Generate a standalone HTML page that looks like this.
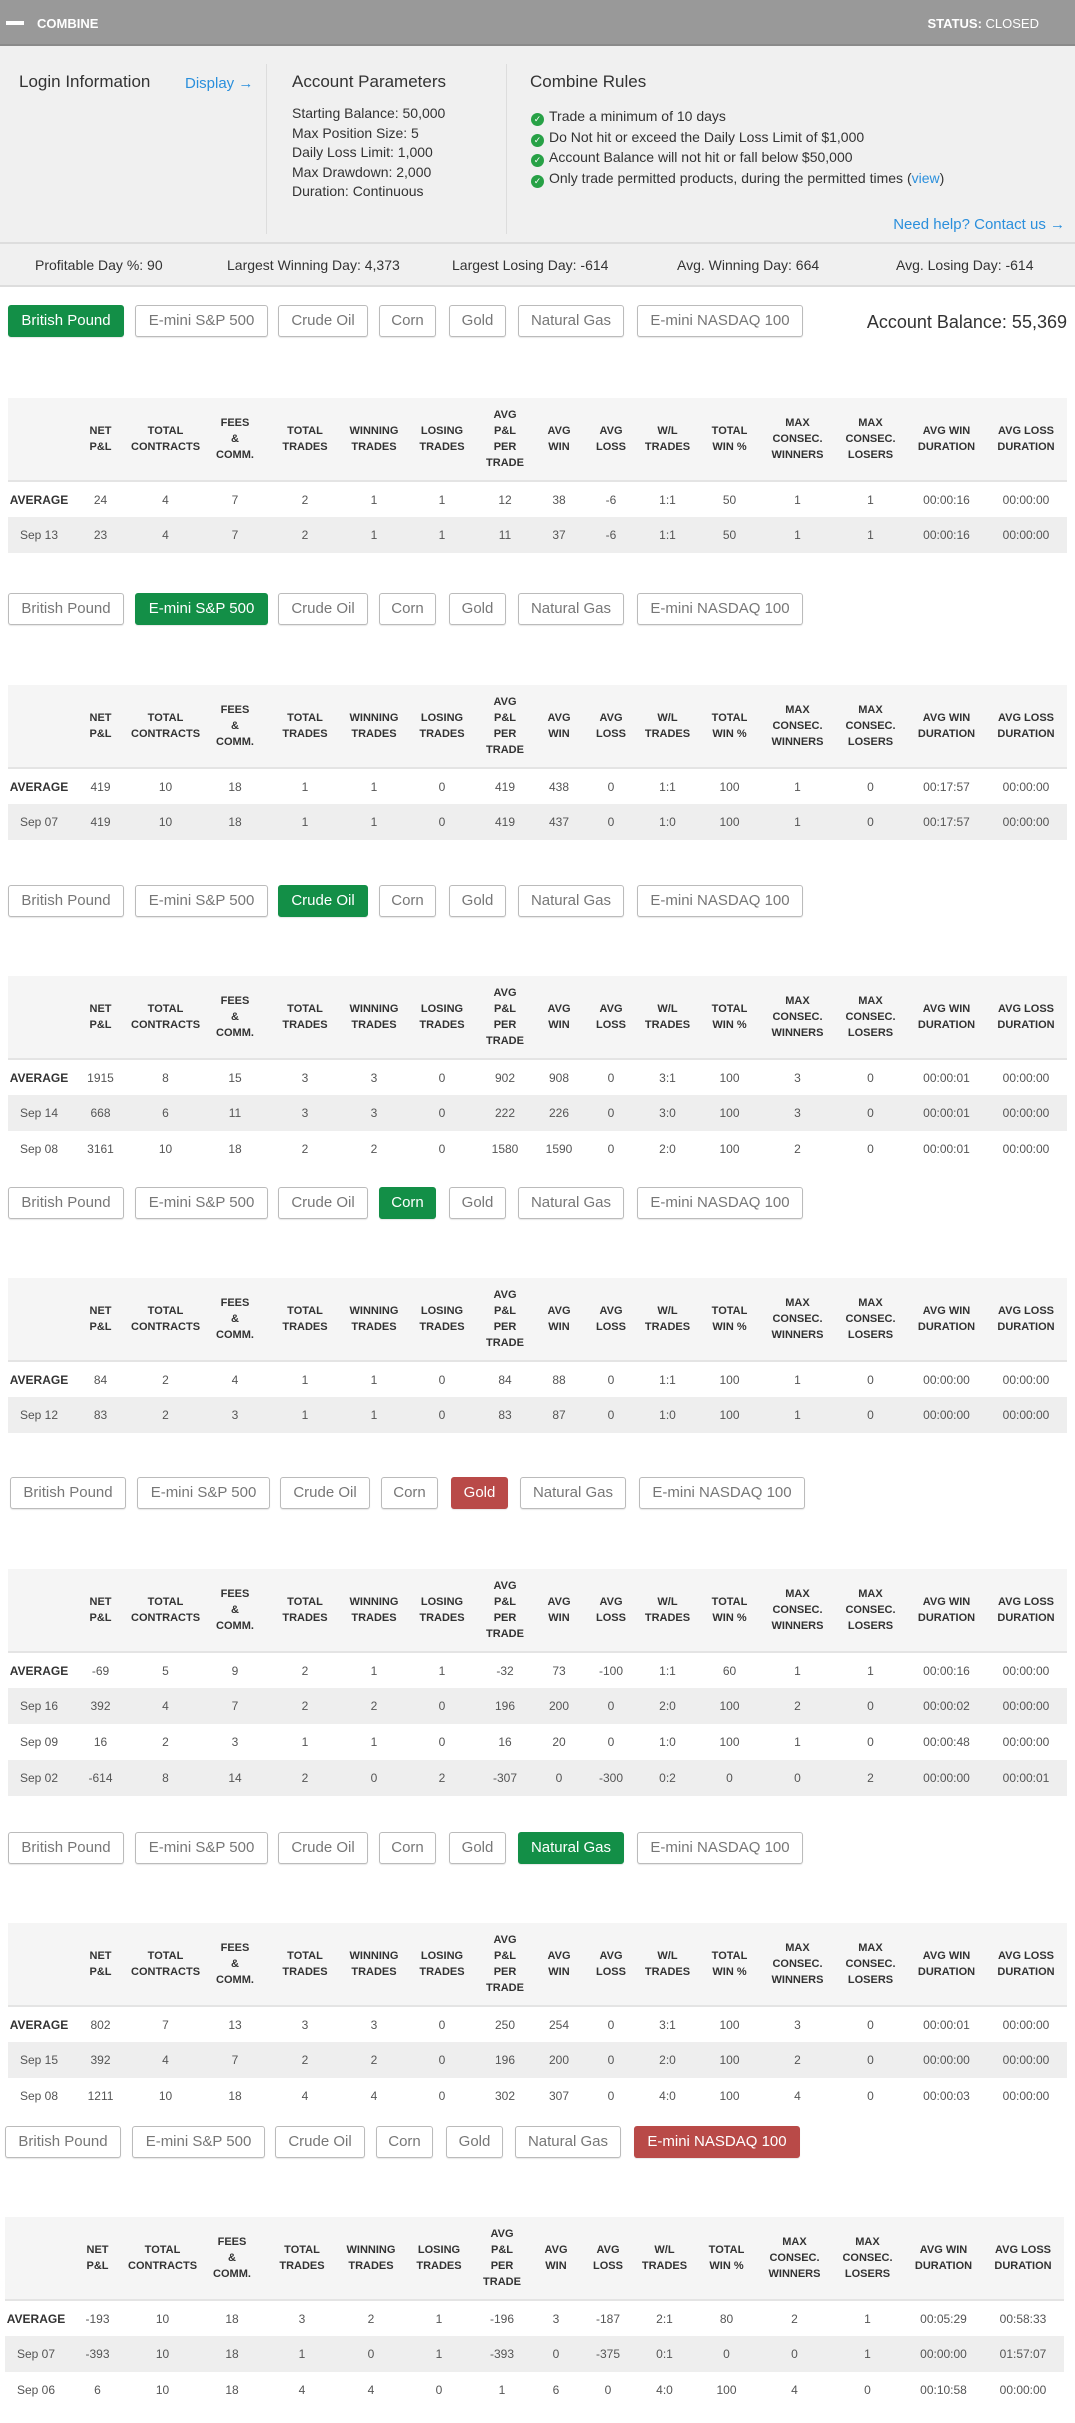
<!DOCTYPE html>
<html><head><meta charset="utf-8"><style>
*{box-sizing:border-box;margin:0;padding:0}
body{width:1075px;height:2423px;position:relative;background:#fff;font-family:"Liberation Sans",Arial,sans-serif;color:#333;overflow:hidden}
.hdr{position:absolute;left:0;top:0;width:1075px;height:46px;background:#999;border-bottom:2px solid #8a8a8a;color:#fff;font-size:13px;font-weight:bold}
.hdr .dash{position:absolute;left:6px;top:21px;width:18px;height:4px;background:#fff}
.hdr .t{position:absolute;left:37px;top:16px}
.hdr .s{position:absolute;right:36px;top:16px}
.hdr .s span{font-weight:normal}
.info{position:absolute;left:0;top:46px;width:1075px;height:198px;background:#f0f0f0;border-bottom:2px solid #ddd}
.a{position:absolute;white-space:nowrap}
.sep{position:absolute;top:18px;width:1px;height:170px;background:#ddd}
.h2{font-size:17px;color:#333}
.p{font-size:14px;color:#333;line-height:19.5px}
.blue{color:#2a8fdc}
.chk{display:inline-block;width:13px;height:13px;border-radius:50%;background:#27a146;color:#fff;font-size:9px;line-height:13px;text-align:center;margin-right:5px;vertical-align:-1px}
.stats{position:absolute;left:0;top:244px;width:1075px;height:43px;background:#f0f0f0;border-bottom:2px solid #ddd;font-size:14px}
.stats .a{top:13px}
.tabs{position:absolute;left:8px;height:32px}
.b{position:absolute;top:0;height:32px;border:1px solid #bbb;border-radius:3px;background:#fff;color:#777;font-size:15px;text-align:center;line-height:30px;box-shadow:0 1px 1px rgba(0,0,0,.1)}
.b.g{background:#138f47;border-color:#138f47;color:#fff}
.b.r{background:#b94a48;border-color:#b94a48;color:#fff}
table{position:absolute;left:8px;width:1059px;border-collapse:collapse;table-layout:fixed;font-size:12px}
th{background:#f5f5f5;font-size:11px;font-weight:bold;color:#333;line-height:16px;height:83px;border-bottom:2px solid #e4e4e4;text-align:center;vertical-align:middle}
td{height:36px;text-align:center;color:#555}
tr.e td{background:#eee}
td:first-child{color:#555}
tr.av td:first-child{font-weight:bold;color:#333}
</style></head><body>
<div class="hdr"><div class="dash"></div><div class="t">COMBINE</div><div class="s">STATUS: <span>CLOSED</span></div></div>
<div class="info">
<div class="a h2" style="left:19px;top:26px">Login Information</div>
<div class="a blue" style="left:185px;top:29px;font-size:15px">Display →</div>
<div class="sep" style="left:266px"></div>
<div class="a h2" style="left:292px;top:26px">Account Parameters</div>
<div class="a p" style="left:292px;top:58px">Starting Balance: 50,000<br>Max Position Size: 5<br>Daily Loss Limit: 1,000<br>Max Drawdown: 2,000<br>Duration: Continuous</div>
<div class="sep" style="left:506px"></div>
<div class="a h2" style="left:530px;top:26px">Combine Rules</div>
<div class="a p" style="left:531px;top:60px;line-height:20.7px"><span class="chk">✓</span>Trade a minimum of 10 days<br><span class="chk">✓</span>Do Not hit or exceed the Daily Loss Limit of $1,000<br><span class="chk">✓</span>Account Balance will not hit or fall below $50,000<br><span class="chk">✓</span>Only trade permitted products, during the permitted times (<span class="blue">view</span>)</div>
<div class="a blue" style="right:10px;top:170px;font-size:15px">Need help? Contact us →</div>
</div>
<div class="stats">
<div class="a" style="left:35px">Profitable Day %: 90</div>
<div class="a" style="left:227px">Largest Winning Day: 4,373</div>
<div class="a" style="left:452px">Largest Losing Day: -614</div>
<div class="a" style="left:677px">Avg. Winning Day: 664</div>
<div class="a" style="left:896px">Avg. Losing Day: -614</div>
</div>
<div class="a" style="right:8px;top:312px;font-size:18px;color:#333">Account Balance: 55,369</div>

<div class="tabs" style="top:305px"><div class="b g" style="left:0;width:116px">British Pound</div><div class="b" style="left:127px;width:133px">E-mini S&amp;P 500</div><div class="b" style="left:270px;width:90px">Crude Oil</div><div class="b" style="left:371px;width:57px">Corn</div><div class="b" style="left:441px;width:57px">Gold</div><div class="b" style="left:510px;width:106px">Natural Gas</div><div class="b" style="left:629px;width:166px">E-mini NASDAQ 100</div></div>
<div class="tabs" style="top:593px"><div class="b" style="left:0;width:116px">British Pound</div><div class="b g" style="left:127px;width:133px">E-mini S&amp;P 500</div><div class="b" style="left:270px;width:90px">Crude Oil</div><div class="b" style="left:371px;width:57px">Corn</div><div class="b" style="left:441px;width:57px">Gold</div><div class="b" style="left:510px;width:106px">Natural Gas</div><div class="b" style="left:629px;width:166px">E-mini NASDAQ 100</div></div>
<div class="tabs" style="top:885px"><div class="b" style="left:0;width:116px">British Pound</div><div class="b" style="left:127px;width:133px">E-mini S&amp;P 500</div><div class="b g" style="left:270px;width:90px">Crude Oil</div><div class="b" style="left:371px;width:57px">Corn</div><div class="b" style="left:441px;width:57px">Gold</div><div class="b" style="left:510px;width:106px">Natural Gas</div><div class="b" style="left:629px;width:166px">E-mini NASDAQ 100</div></div>
<div class="tabs" style="top:1187px"><div class="b" style="left:0;width:116px">British Pound</div><div class="b" style="left:127px;width:133px">E-mini S&amp;P 500</div><div class="b" style="left:270px;width:90px">Crude Oil</div><div class="b g" style="left:371px;width:57px">Corn</div><div class="b" style="left:441px;width:57px">Gold</div><div class="b" style="left:510px;width:106px">Natural Gas</div><div class="b" style="left:629px;width:166px">E-mini NASDAQ 100</div></div>
<div class="tabs" style="top:1477px;left:10px"><div class="b" style="left:0;width:116px">British Pound</div><div class="b" style="left:127px;width:133px">E-mini S&amp;P 500</div><div class="b" style="left:270px;width:90px">Crude Oil</div><div class="b" style="left:371px;width:57px">Corn</div><div class="b r" style="left:441px;width:57px">Gold</div><div class="b" style="left:510px;width:106px">Natural Gas</div><div class="b" style="left:629px;width:166px">E-mini NASDAQ 100</div></div>
<div class="tabs" style="top:1832px"><div class="b" style="left:0;width:116px">British Pound</div><div class="b" style="left:127px;width:133px">E-mini S&amp;P 500</div><div class="b" style="left:270px;width:90px">Crude Oil</div><div class="b" style="left:371px;width:57px">Corn</div><div class="b" style="left:441px;width:57px">Gold</div><div class="b g" style="left:510px;width:106px">Natural Gas</div><div class="b" style="left:629px;width:166px">E-mini NASDAQ 100</div></div>
<div class="tabs" style="top:2126px;left:5px"><div class="b" style="left:0;width:116px">British Pound</div><div class="b" style="left:127px;width:133px">E-mini S&amp;P 500</div><div class="b" style="left:270px;width:90px">Crude Oil</div><div class="b" style="left:371px;width:57px">Corn</div><div class="b" style="left:441px;width:57px">Gold</div><div class="b" style="left:510px;width:106px">Natural Gas</div><div class="b r" style="left:629px;width:166px">E-mini NASDAQ 100</div></div>

<table style="top:398px"><colgroup><col style="width:62px"><col style="width:61px"><col style="width:69px"><col style="width:70px"><col style="width:70px"><col style="width:68px"><col style="width:68px"><col style="width:58px"><col style="width:50px"><col style="width:54px"><col style="width:59px"><col style="width:65px"><col style="width:71px"><col style="width:75px"><col style="width:77px"><col style="width:82px"></colgroup>
<tr><th></th><th>NET<br>P&amp;L</th><th>TOTAL<br>CONTRACTS</th><th>FEES<br>&amp;<br>COMM.</th><th>TOTAL<br>TRADES</th><th>WINNING<br>TRADES</th><th>LOSING<br>TRADES</th><th>AVG<br>P&amp;L<br>PER<br>TRADE</th><th>AVG<br>WIN</th><th>AVG<br>LOSS</th><th>W/L<br>TRADES</th><th>TOTAL<br>WIN %</th><th>MAX<br>CONSEC.<br>WINNERS</th><th>MAX<br>CONSEC.<br>LOSERS</th><th>AVG WIN<br>DURATION</th><th>AVG LOSS<br>DURATION</th></tr>
<tr class="av"><td>AVERAGE</td><td>24</td><td>4</td><td>7</td><td>2</td><td>1</td><td>1</td><td>12</td><td>38</td><td>-6</td><td>1:1</td><td>50</td><td>1</td><td>1</td><td>00:00:16</td><td>00:00:00</td></tr>
<tr class="e"><td>Sep 13</td><td>23</td><td>4</td><td>7</td><td>2</td><td>1</td><td>1</td><td>11</td><td>37</td><td>-6</td><td>1:1</td><td>50</td><td>1</td><td>1</td><td>00:00:16</td><td>00:00:00</td></tr>
</table>

<table style="top:685px"><colgroup><col style="width:62px"><col style="width:61px"><col style="width:69px"><col style="width:70px"><col style="width:70px"><col style="width:68px"><col style="width:68px"><col style="width:58px"><col style="width:50px"><col style="width:54px"><col style="width:59px"><col style="width:65px"><col style="width:71px"><col style="width:75px"><col style="width:77px"><col style="width:82px"></colgroup>
<tr><th></th><th>NET<br>P&amp;L</th><th>TOTAL<br>CONTRACTS</th><th>FEES<br>&amp;<br>COMM.</th><th>TOTAL<br>TRADES</th><th>WINNING<br>TRADES</th><th>LOSING<br>TRADES</th><th>AVG<br>P&amp;L<br>PER<br>TRADE</th><th>AVG<br>WIN</th><th>AVG<br>LOSS</th><th>W/L<br>TRADES</th><th>TOTAL<br>WIN %</th><th>MAX<br>CONSEC.<br>WINNERS</th><th>MAX<br>CONSEC.<br>LOSERS</th><th>AVG WIN<br>DURATION</th><th>AVG LOSS<br>DURATION</th></tr>
<tr class="av"><td>AVERAGE</td><td>419</td><td>10</td><td>18</td><td>1</td><td>1</td><td>0</td><td>419</td><td>438</td><td>0</td><td>1:1</td><td>100</td><td>1</td><td>0</td><td>00:17:57</td><td>00:00:00</td></tr>
<tr class="e"><td>Sep 07</td><td>419</td><td>10</td><td>18</td><td>1</td><td>1</td><td>0</td><td>419</td><td>437</td><td>0</td><td>1:0</td><td>100</td><td>1</td><td>0</td><td>00:17:57</td><td>00:00:00</td></tr>
</table>

<table style="top:976px"><colgroup><col style="width:62px"><col style="width:61px"><col style="width:69px"><col style="width:70px"><col style="width:70px"><col style="width:68px"><col style="width:68px"><col style="width:58px"><col style="width:50px"><col style="width:54px"><col style="width:59px"><col style="width:65px"><col style="width:71px"><col style="width:75px"><col style="width:77px"><col style="width:82px"></colgroup>
<tr><th></th><th>NET<br>P&amp;L</th><th>TOTAL<br>CONTRACTS</th><th>FEES<br>&amp;<br>COMM.</th><th>TOTAL<br>TRADES</th><th>WINNING<br>TRADES</th><th>LOSING<br>TRADES</th><th>AVG<br>P&amp;L<br>PER<br>TRADE</th><th>AVG<br>WIN</th><th>AVG<br>LOSS</th><th>W/L<br>TRADES</th><th>TOTAL<br>WIN %</th><th>MAX<br>CONSEC.<br>WINNERS</th><th>MAX<br>CONSEC.<br>LOSERS</th><th>AVG WIN<br>DURATION</th><th>AVG LOSS<br>DURATION</th></tr>
<tr class="av"><td>AVERAGE</td><td>1915</td><td>8</td><td>15</td><td>3</td><td>3</td><td>0</td><td>902</td><td>908</td><td>0</td><td>3:1</td><td>100</td><td>3</td><td>0</td><td>00:00:01</td><td>00:00:00</td></tr>
<tr class="e"><td>Sep 14</td><td>668</td><td>6</td><td>11</td><td>3</td><td>3</td><td>0</td><td>222</td><td>226</td><td>0</td><td>3:0</td><td>100</td><td>3</td><td>0</td><td>00:00:01</td><td>00:00:00</td></tr>
<tr><td>Sep 08</td><td>3161</td><td>10</td><td>18</td><td>2</td><td>2</td><td>0</td><td>1580</td><td>1590</td><td>0</td><td>2:0</td><td>100</td><td>2</td><td>0</td><td>00:00:01</td><td>00:00:00</td></tr>
</table>

<table style="top:1278px"><colgroup><col style="width:62px"><col style="width:61px"><col style="width:69px"><col style="width:70px"><col style="width:70px"><col style="width:68px"><col style="width:68px"><col style="width:58px"><col style="width:50px"><col style="width:54px"><col style="width:59px"><col style="width:65px"><col style="width:71px"><col style="width:75px"><col style="width:77px"><col style="width:82px"></colgroup>
<tr><th></th><th>NET<br>P&amp;L</th><th>TOTAL<br>CONTRACTS</th><th>FEES<br>&amp;<br>COMM.</th><th>TOTAL<br>TRADES</th><th>WINNING<br>TRADES</th><th>LOSING<br>TRADES</th><th>AVG<br>P&amp;L<br>PER<br>TRADE</th><th>AVG<br>WIN</th><th>AVG<br>LOSS</th><th>W/L<br>TRADES</th><th>TOTAL<br>WIN %</th><th>MAX<br>CONSEC.<br>WINNERS</th><th>MAX<br>CONSEC.<br>LOSERS</th><th>AVG WIN<br>DURATION</th><th>AVG LOSS<br>DURATION</th></tr>
<tr class="av"><td>AVERAGE</td><td>84</td><td>2</td><td>4</td><td>1</td><td>1</td><td>0</td><td>84</td><td>88</td><td>0</td><td>1:1</td><td>100</td><td>1</td><td>0</td><td>00:00:00</td><td>00:00:00</td></tr>
<tr class="e"><td>Sep 12</td><td>83</td><td>2</td><td>3</td><td>1</td><td>1</td><td>0</td><td>83</td><td>87</td><td>0</td><td>1:0</td><td>100</td><td>1</td><td>0</td><td>00:00:00</td><td>00:00:00</td></tr>
</table>

<table style="top:1569px"><colgroup><col style="width:62px"><col style="width:61px"><col style="width:69px"><col style="width:70px"><col style="width:70px"><col style="width:68px"><col style="width:68px"><col style="width:58px"><col style="width:50px"><col style="width:54px"><col style="width:59px"><col style="width:65px"><col style="width:71px"><col style="width:75px"><col style="width:77px"><col style="width:82px"></colgroup>
<tr><th></th><th>NET<br>P&amp;L</th><th>TOTAL<br>CONTRACTS</th><th>FEES<br>&amp;<br>COMM.</th><th>TOTAL<br>TRADES</th><th>WINNING<br>TRADES</th><th>LOSING<br>TRADES</th><th>AVG<br>P&amp;L<br>PER<br>TRADE</th><th>AVG<br>WIN</th><th>AVG<br>LOSS</th><th>W/L<br>TRADES</th><th>TOTAL<br>WIN %</th><th>MAX<br>CONSEC.<br>WINNERS</th><th>MAX<br>CONSEC.<br>LOSERS</th><th>AVG WIN<br>DURATION</th><th>AVG LOSS<br>DURATION</th></tr>
<tr class="av"><td>AVERAGE</td><td>-69</td><td>5</td><td>9</td><td>2</td><td>1</td><td>1</td><td>-32</td><td>73</td><td>-100</td><td>1:1</td><td>60</td><td>1</td><td>1</td><td>00:00:16</td><td>00:00:00</td></tr>
<tr class="e"><td>Sep 16</td><td>392</td><td>4</td><td>7</td><td>2</td><td>2</td><td>0</td><td>196</td><td>200</td><td>0</td><td>2:0</td><td>100</td><td>2</td><td>0</td><td>00:00:02</td><td>00:00:00</td></tr>
<tr><td>Sep 09</td><td>16</td><td>2</td><td>3</td><td>1</td><td>1</td><td>0</td><td>16</td><td>20</td><td>0</td><td>1:0</td><td>100</td><td>1</td><td>0</td><td>00:00:48</td><td>00:00:00</td></tr>
<tr class="e"><td>Sep 02</td><td>-614</td><td>8</td><td>14</td><td>2</td><td>0</td><td>2</td><td>-307</td><td>0</td><td>-300</td><td>0:2</td><td>0</td><td>0</td><td>2</td><td>00:00:00</td><td>00:00:01</td></tr>
</table>

<table style="top:1923px"><colgroup><col style="width:62px"><col style="width:61px"><col style="width:69px"><col style="width:70px"><col style="width:70px"><col style="width:68px"><col style="width:68px"><col style="width:58px"><col style="width:50px"><col style="width:54px"><col style="width:59px"><col style="width:65px"><col style="width:71px"><col style="width:75px"><col style="width:77px"><col style="width:82px"></colgroup>
<tr><th></th><th>NET<br>P&amp;L</th><th>TOTAL<br>CONTRACTS</th><th>FEES<br>&amp;<br>COMM.</th><th>TOTAL<br>TRADES</th><th>WINNING<br>TRADES</th><th>LOSING<br>TRADES</th><th>AVG<br>P&amp;L<br>PER<br>TRADE</th><th>AVG<br>WIN</th><th>AVG<br>LOSS</th><th>W/L<br>TRADES</th><th>TOTAL<br>WIN %</th><th>MAX<br>CONSEC.<br>WINNERS</th><th>MAX<br>CONSEC.<br>LOSERS</th><th>AVG WIN<br>DURATION</th><th>AVG LOSS<br>DURATION</th></tr>
<tr class="av"><td>AVERAGE</td><td>802</td><td>7</td><td>13</td><td>3</td><td>3</td><td>0</td><td>250</td><td>254</td><td>0</td><td>3:1</td><td>100</td><td>3</td><td>0</td><td>00:00:01</td><td>00:00:00</td></tr>
<tr class="e"><td>Sep 15</td><td>392</td><td>4</td><td>7</td><td>2</td><td>2</td><td>0</td><td>196</td><td>200</td><td>0</td><td>2:0</td><td>100</td><td>2</td><td>0</td><td>00:00:00</td><td>00:00:00</td></tr>
<tr><td>Sep 08</td><td>1211</td><td>10</td><td>18</td><td>4</td><td>4</td><td>0</td><td>302</td><td>307</td><td>0</td><td>4:0</td><td>100</td><td>4</td><td>0</td><td>00:00:03</td><td>00:00:00</td></tr>
</table>

<table style="top:2217px;left:5px"><colgroup><col style="width:62px"><col style="width:61px"><col style="width:69px"><col style="width:70px"><col style="width:70px"><col style="width:68px"><col style="width:68px"><col style="width:58px"><col style="width:50px"><col style="width:54px"><col style="width:59px"><col style="width:65px"><col style="width:71px"><col style="width:75px"><col style="width:77px"><col style="width:82px"></colgroup>
<tr><th></th><th>NET<br>P&amp;L</th><th>TOTAL<br>CONTRACTS</th><th>FEES<br>&amp;<br>COMM.</th><th>TOTAL<br>TRADES</th><th>WINNING<br>TRADES</th><th>LOSING<br>TRADES</th><th>AVG<br>P&amp;L<br>PER<br>TRADE</th><th>AVG<br>WIN</th><th>AVG<br>LOSS</th><th>W/L<br>TRADES</th><th>TOTAL<br>WIN %</th><th>MAX<br>CONSEC.<br>WINNERS</th><th>MAX<br>CONSEC.<br>LOSERS</th><th>AVG WIN<br>DURATION</th><th>AVG LOSS<br>DURATION</th></tr>
<tr class="av"><td>AVERAGE</td><td>-193</td><td>10</td><td>18</td><td>3</td><td>2</td><td>1</td><td>-196</td><td>3</td><td>-187</td><td>2:1</td><td>80</td><td>2</td><td>1</td><td>00:05:29</td><td>00:58:33</td></tr>
<tr class="e"><td>Sep 07</td><td>-393</td><td>10</td><td>18</td><td>1</td><td>0</td><td>1</td><td>-393</td><td>0</td><td>-375</td><td>0:1</td><td>0</td><td>0</td><td>1</td><td>00:00:00</td><td>01:57:07</td></tr>
<tr><td>Sep 06</td><td>6</td><td>10</td><td>18</td><td>4</td><td>4</td><td>0</td><td>1</td><td>6</td><td>0</td><td>4:0</td><td>100</td><td>4</td><td>0</td><td>00:10:58</td><td>00:00:00</td></tr>
</table>
</body></html>
